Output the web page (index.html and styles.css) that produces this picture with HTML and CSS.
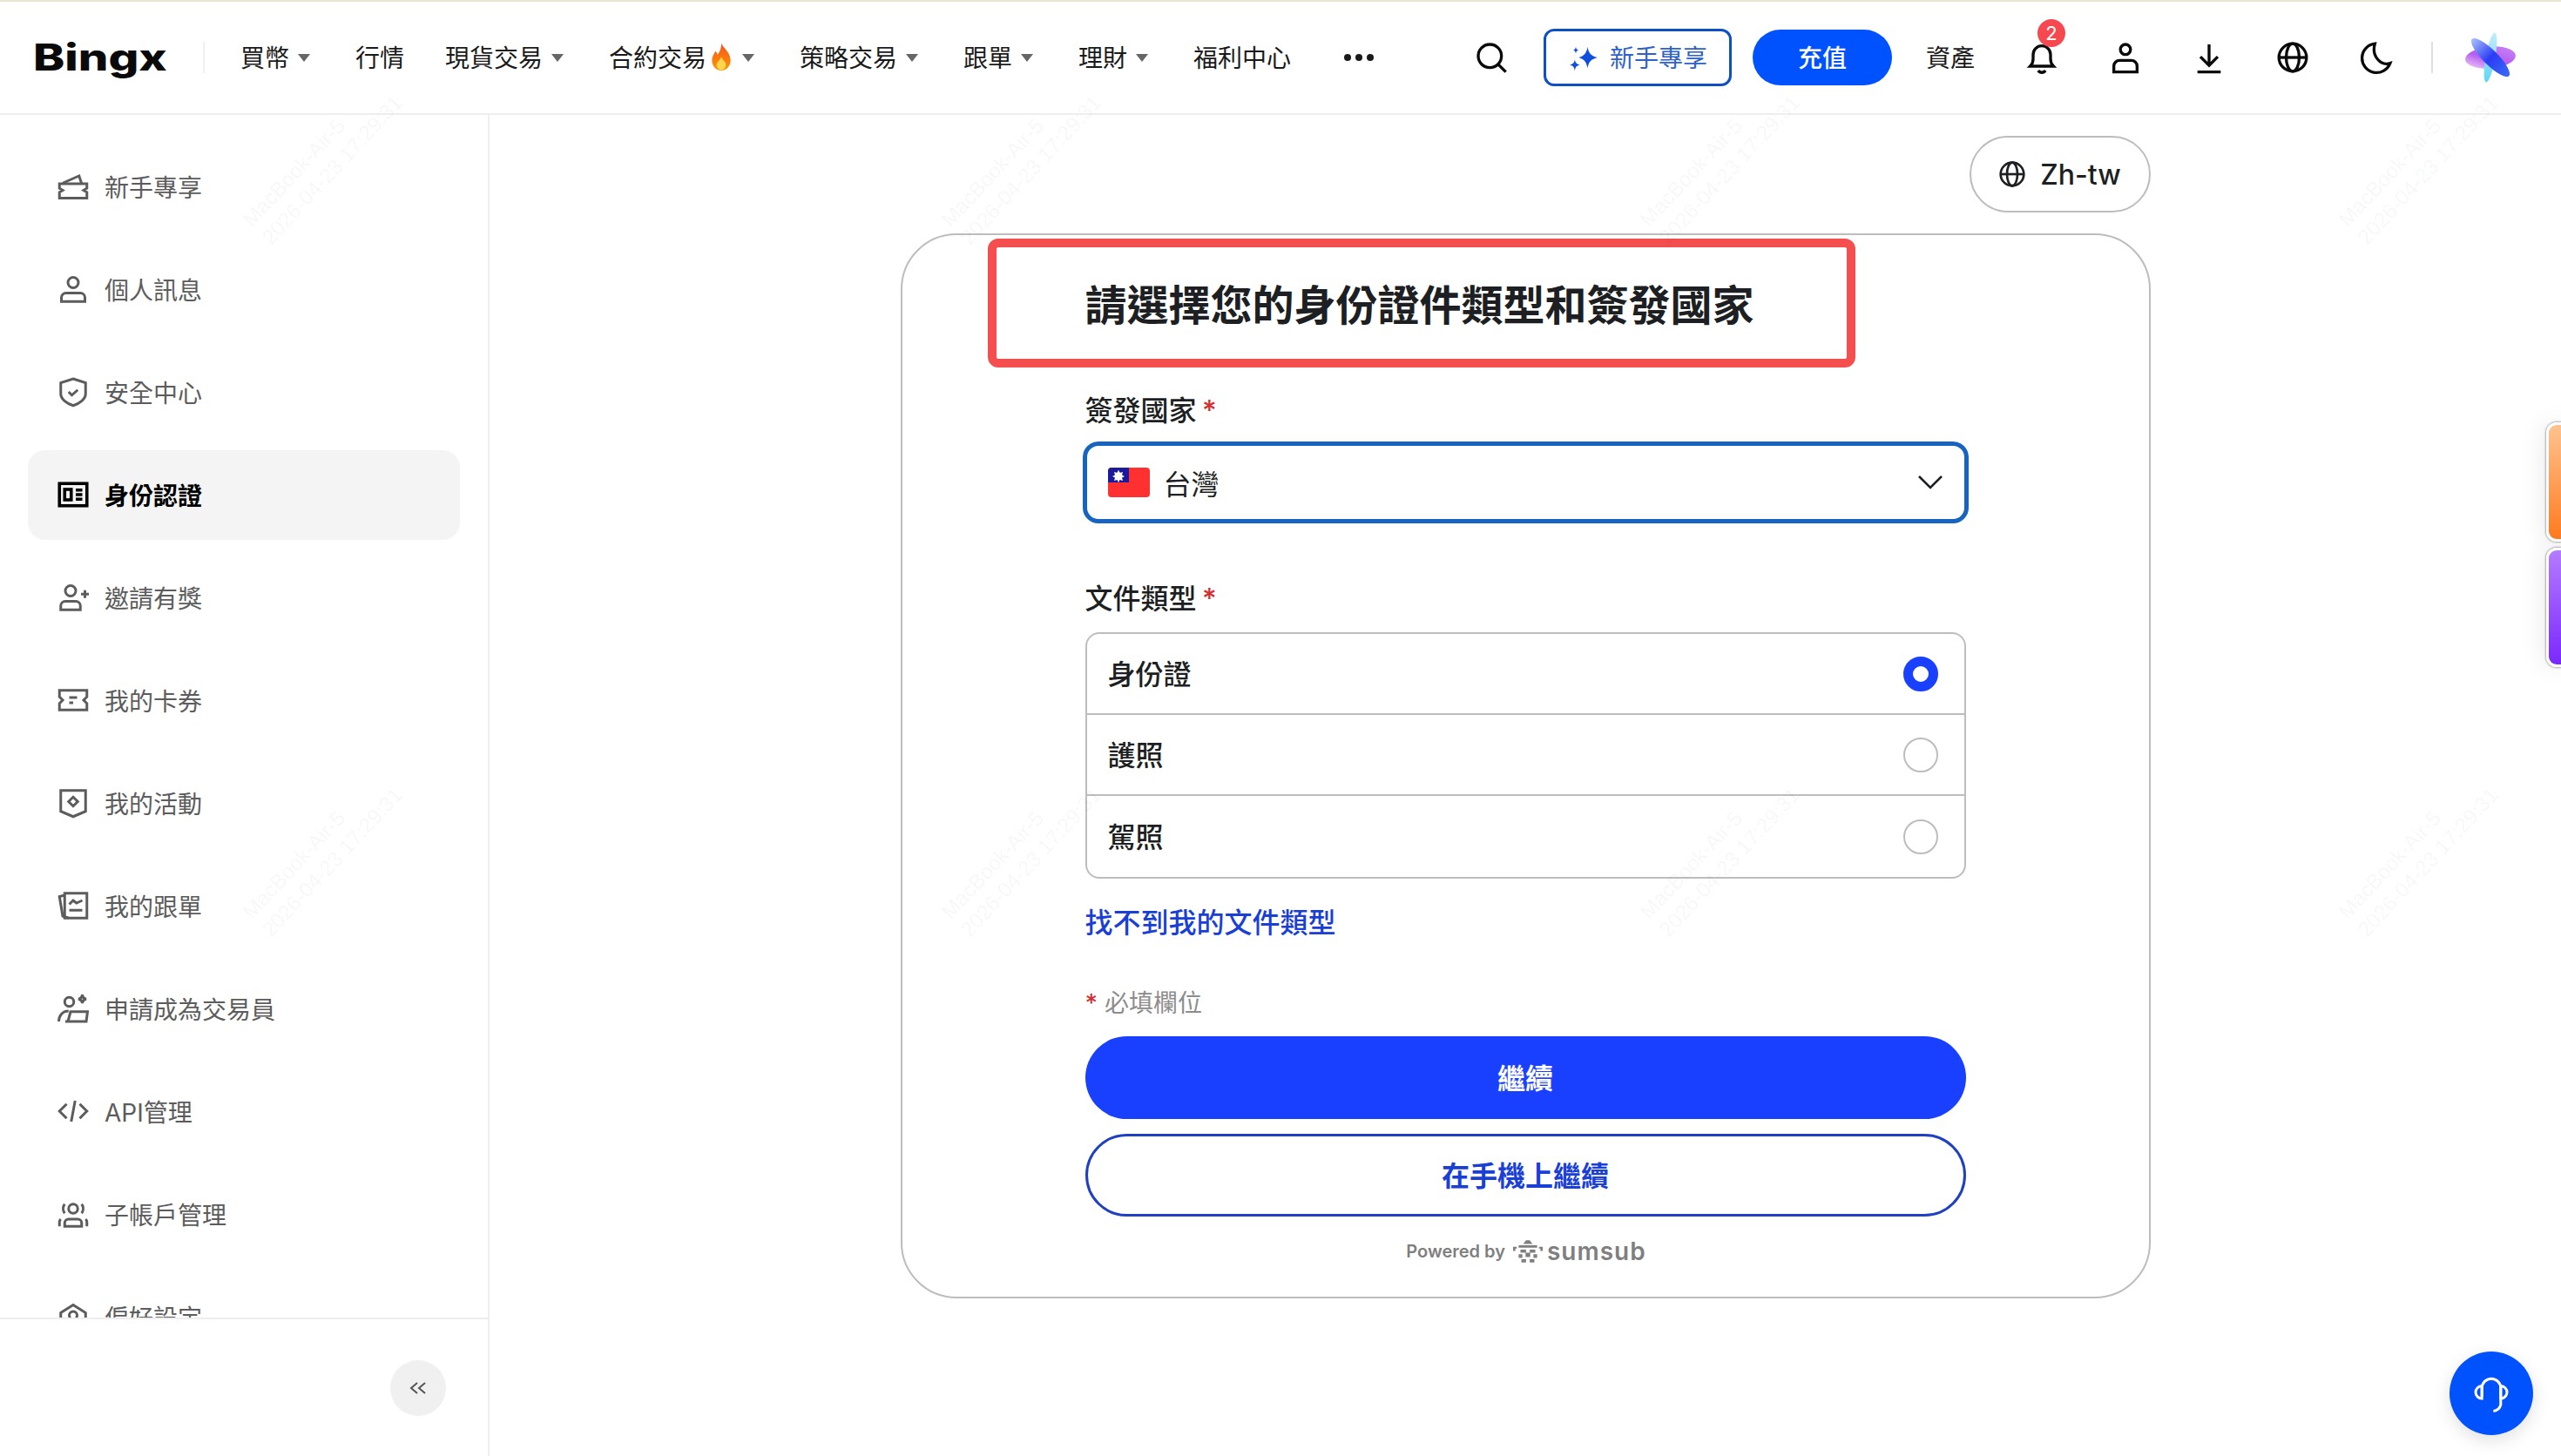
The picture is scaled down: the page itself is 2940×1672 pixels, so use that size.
FILE: index.html
```html
<!DOCTYPE html>
<html lang="zh-Hant">
<head>
  <meta charset="UTF-8" />
  <title>BingX - 身份認證</title>
  <link rel="stylesheet" href="styles.css">
</head>
<body>
  <header class="topbar">
    <div class="logo-box"><a class="logo">Bingx</a></div>
    <span class="topbar-line"></span>
    <nav class="topnav">
      <a class="topnav-item">買幣<i class="caret"></i></a>
      <a class="topnav-item tight">行情</a>
      <a class="topnav-item">現貨交易<i class="caret"></i></a>
      <a class="topnav-item">合約交易
        <svg class="fire" viewBox="0 0 24 32"><defs><linearGradient id="fireGrad" x1="0" y1="0" x2="0" y2="1"><stop offset="0" stop-color="#f4511e"/><stop offset="1" stop-color="#ff9800"/></linearGradient></defs><path d="M12 1c1 5 9 9 10 18 .6 7-4.500 12-10 12S1.500 26 2 19c.3-4 2.500-6 3.500-9 1.500 1 2.300 2.500 2.500 4C10.500 11 12.500 6 12 1z" fill="url(#fireGrad)"/><path d="M12 16c.5 3 5 5 5 9 0 3-2.500 5.500-5 5.500S7 28 7 25c0-3.500 4-5 5-9z" fill="#ffd54f"/></svg>
        <i class="caret"></i></a>
      <a class="topnav-item">策略交易<i class="caret"></i></a>
      <a class="topnav-item">跟單<i class="caret"></i></a>
      <a class="topnav-item">理財<i class="caret"></i></a>
      <a class="topnav-item">福利中心</a>
      <a class="topnav-more"><span></span><span></span><span></span></a>
    </nav>
    <div class="topbar-right">
      <svg class="top-icon search-icon" viewBox="0 0 24 24"><circle cx="11" cy="11" r="8"/><path d="M17 17l5 5"/></svg>
      <a class="newbie-btn">
        <svg class="sparkle" viewBox="0 0 32 32"><path d="M20 5c1 6 3 9 10 11-7 2-9 5-10 11-1-6-3-9-9-11 6-2 8-5 9-11z"/><path d="M7 18c.5 3 1.500 4.500 5 5.500-3.500 1-4.500 2.500-5 6-.5-3.500-1.500-5-5-6 3.500-1 4.500-2.500 5-5.500z"/><path d="M8 5c.3 2 1 3 3 3.500-2 .5-2.700 1.500-3 3.500-.3-2-1-3-3-3.500 2-.5 2.700-1.500 3-3.500z"/></svg>
        <span>新手專享</span>
      </a>
      <a class="deposit-btn">充值</a>
      <a class="assets-link">資產</a>
      <span class="bell-wrap">
        <svg class="top-icon" viewBox="0 0 24 24"><path d="M4 18c1.500-1.500 2-3 2-5V10a6 6 0 0 1 12 0v3c0 2 .5 3.500 2 5z"/><path d="M9.500 21a3 3 0 0 0 5 0"/></svg>
        <span class="badge">2</span>
      </span>
      <svg class="top-icon" viewBox="0 0 24 24"><circle cx="12" cy="6.500" r="3.500"/><path d="M4 22v-4a4 4 0 0 1 4-4h8a4 4 0 0 1 4 4v4z"/></svg>
      <svg class="top-icon" viewBox="0 0 24 24"><path d="M12 3v14M6 11.500l6 6 6-6M4 22h16"/></svg>
      <svg class="top-icon" viewBox="0 0 24 24"><circle cx="12" cy="12" r="9.500"/><ellipse cx="12" cy="12" rx="4.500" ry="9.500"/><path d="M2.500 12h19"/></svg>
      <svg class="top-icon" viewBox="0 0 24 24"><path d="M11 2.500a10 10 0 1 0 10.500 13.500C15 18 8.500 11 11 2.500z"/></svg>
      <span class="topbar-line right-line"></span>
      <svg class="avatar" viewBox="0 0 60 60"><defs><linearGradient id="avaA" x1="0" y1="1" x2="1" y2="0"><stop offset="0" stop-color="#f6e0fb"/><stop offset=".45" stop-color="#b65cf0"/><stop offset="1" stop-color="#c98af5"/></linearGradient><linearGradient id="avaB" x1="0" y1="0" x2="0" y2="1"><stop offset="0" stop-color="#a9c0fb"/><stop offset=".5" stop-color="#2b3cf5"/><stop offset="1" stop-color="#3a6cf5"/></linearGradient><linearGradient id="avaC" x1="0" y1="0" x2="0" y2="1"><stop offset="0" stop-color="#c4ecfb"/><stop offset="1" stop-color="#5fd6f5"/></linearGradient></defs><ellipse cx="30" cy="30" rx="29" ry="12.500" fill="url(#avaA)" transform="rotate(-5 30 30)"/><ellipse cx="30" cy="30" rx="5.500" ry="29" fill="url(#avaC)" transform="rotate(10 30 30)"/><ellipse cx="30" cy="30" rx="8.500" ry="30" fill="url(#avaB)" transform="rotate(-45 30 30)"/></svg>
    </div>
  </header>

  <div class="layout">
    <aside class="sidebar">
      <ul class="side-list">
        <li class="side-item">
          <svg class="side-icon" viewBox="0 0 24 24"><path d="M1.500 10h21v3.500L20 15l2.500 1.500V21h-21v-4.500L4 15l-2.500-1.500z"/><path d="M4 9.500l12.500-5.500 2 6"/></svg>新手專享
        </li>
        <li class="side-item">
          <svg class="side-icon" viewBox="0 0 24 24"><circle cx="12" cy="7" r="4"/><path d="M3 21.500v-3a3.500 3.500 0 0 1 3.500-3.500h11a3.500 3.500 0 0 1 3.500 3.500v3z"/></svg>個人訊息
        </li>
        <li class="side-item">
          <svg class="side-icon" viewBox="0 0 24 24"><path d="M12 2l9.500 3v8.500c0 4-4.500 7.500-9.500 9-5-1.500-9.500-5-9.500-9V5z"/><path d="M8.500 12l2.500 2.500 4.500-4"/></svg>安全中心
        </li>
        <li class="side-item active">
          <svg class="side-icon" viewBox="0 0 24 24"><rect x="1.500" y="3.500" width="21" height="17"/><rect x="5.500" y="8" width="5" height="8"/><path d="M14 8.500h5M14 12h5M14 15.500h5"/></svg>身份認證
        </li>
        <li class="side-item">
          <svg class="side-icon" viewBox="0 0 24 24"><circle cx="10" cy="7" r="4"/><path d="M2.500 21.500v-3A3.500 3.500 0 0 1 6 15h8a3.500 3.500 0 0 1 3.500 3.500v3zM18 9.500h6M21 6.500v6"/></svg>邀請有獎
        </li>
        <li class="side-item">
          <svg class="side-icon" viewBox="0 0 24 24"><path d="M1.500 4.500h21v5L20 12l2.500 2.500v5h-21v-5L4 12 1.500 9.500z"/><path d="M9 10h6M9 14h3"/></svg>我的卡券
        </li>
        <li class="side-item">
          <svg class="side-icon" viewBox="0 0 24 24"><path d="M2.500 2.500h19v16l-9.500 4-9.500-4z"/><path d="M12 7.500l3.500 3.500-3.500 3.500L8.500 11z"/></svg>我的活動
        </li>
        <li class="side-item">
          <svg class="side-icon" viewBox="0 0 24 24"><rect x="5.500" y="2.500" width="17" height="19"/><path d="M5.500 4L1.500 5l2.500 15 4.500 1.500M9 11l3-3 2.500 2L19 8M9 15.500h10"/></svg>我的跟單
        </li>
        <li class="side-item">
          <svg class="side-icon" viewBox="0 0 24 24"><circle cx="9" cy="7" r="3.500"/><path d="M1 22c0-4 2.500-8 7.500-8M8 22l2-7.500h13L22 22zM6 22h16M19 1.500c.2 2 1 3 3 3.300-2 .4-2.800 1.200-3 3.200-.2-2-1-2.800-3-3.200 2-.3 2.800-1.300 3-3.300z"/></svg>申請成為交易員
        </li>
        <li class="side-item">
          <svg class="side-icon" viewBox="0 0 24 24"><path d="M7 6.500L1.500 12 7 17.500M17 6.500l5.500 5.500-5.500 5.500M13.500 4l-3 16"/></svg>API管理
        </li>
        <li class="side-item">
          <svg class="side-icon" viewBox="0 0 24 24"><circle cx="12" cy="8" r="3.500"/><path d="M5.500 21.500v-2.500a3 3 0 0 1 3-3h7a3 3 0 0 1 3 3v2.500zM5.500 4.500c-1.500 2-1.500 5 0 7M18.500 4.500c1.500 2 1.500 5 0 7M1.500 21.500v-3.500c0-1 .5-1.500 1-2M22.500 21.500v-3.500c0-1-.5-1.500-1-2"/></svg>子帳戶管理
        </li>
        <li class="side-item">
          <svg class="side-icon" viewBox="0 0 24 24"><path d="M2.500 9l9.500-6 9.500 6v12h-19z"/><circle cx="12" cy="11" r="3"/></svg>偏好設定
        </li>
      </ul>
      <div class="side-foot">
        <button class="collapse-btn">
          <svg viewBox="0 0 24 24"><path d="M11 6l-7 6 7 6M20 6l-7 6 7 6"/></svg>
        </button>
      </div>
    </aside>

    <main class="content">
      <div class="content-wrap">
        <button class="lang-btn">
          <svg viewBox="0 0 24 24"><circle cx="12" cy="12" r="10"/><ellipse cx="12" cy="12" rx="4.500" ry="10"/><path d="M2 12h20"/></svg>
          Zh-tw
        </button>

        <section class="card">
          <h1 class="card-title">請選擇您的身份證件類型和簽發國家</h1>

          <div class="field-label first">簽發國家 <b>*</b></div>
          <div class="select-box">
            <svg class="flag" viewBox="0 0 48 34"><rect width="48" height="34" rx="4" fill="#fe3030"/><path d="M0 4a4 4 0 0 1 4-4h20v17H0z" fill="#1a1a9c"/><circle cx="12" cy="8.500" r="3.200" fill="#fff"/><path d="M12 2.500l1.500 3.500 3.500-1-1 3.500 3 1.500-3 1.500 1 3.500-3.500-1-1.500 3-1.500-3-3.500 1 1-3.500-3-1.500 3-1.500-1-3.500 3.500 1z" fill="#fff"/></svg>
            <span>台灣</span>
            <svg class="chevron" viewBox="0 0 30 18"><path d="M2 2l13 13L28 2"/></svg>
          </div>

          <div class="field-label">文件類型 <b>*</b></div>
          <div class="doc-list">
            <div class="doc-row"><span class="doc-name">身份證</span><span class="radio on"></span></div>
            <div class="doc-row"><span class="doc-name">護照</span><span class="radio"></span></div>
            <div class="doc-row"><span class="doc-name">駕照</span><span class="radio"></span></div>
          </div>

          <a class="doc-link">找不到我的文件類型</a>
          <div class="required-note"><b>*</b> 必填欄位</div>

          <button class="btn-primary">繼續</button>
          <button class="btn-outline">在手機上繼續</button>

          <div class="powered">
            Powered by
            <svg class="sumsub-mark" viewBox="0 0 32 26"><path d="M11 5l3-4h4l3 4zM6 6.500h20v2.500H6zM0 8h4v2H2.500v2.500H0zM28 8h4v4.500h-2.500V10H28zM8 11h6v3.500H8zM18 11h6v3.500h-6zM13.500 14.500h5V19h-5zM6 16h4v4H6zM22 16h4v4h-4zM9 21.500h5V25H9zM18 21.500h5V25h-5z"/></svg>
            <span class="sumsub">sumsub</span>
          </div>
        </section>
      </div>
    </main>
  </div>

  <!-- things that sit on top of the page -->
  <div class="mark-box"></div>
  <div class="side-tab orange"></div>
  <div class="side-tab purple"></div>
  <button class="help-btn">
    <svg viewBox="0 0 40 40"><path d="M11 23V15a9 9 0 0 1 18 0v16a8 8 0 0 1-7 6"/><path d="M11 13a6 6 0 0 0 0 12zM29 13a6 6 0 0 1 0 12z"/></svg>
  </button>

  <div class="watermarks">
    <div class="wm">MacBook-Air-5<br>2026-04-23 17:29:31</div>
    <div class="wm">MacBook-Air-5<br>2026-04-23 17:29:31</div>
    <div class="wm">MacBook-Air-5<br>2026-04-23 17:29:31</div>
    <div class="wm">MacBook-Air-5<br>2026-04-23 17:29:31</div>
    <div class="wm">MacBook-Air-5<br>2026-04-23 17:29:31</div>
    <div class="wm">MacBook-Air-5<br>2026-04-23 17:29:31</div>
    <div class="wm">MacBook-Air-5<br>2026-04-23 17:29:31</div>
    <div class="wm">MacBook-Air-5<br>2026-04-23 17:29:31</div>
  </div>
</body>
</html>
```

FILE: styles.css
```css
* {
  margin: 0;
  padding: 0;
  box-sizing: border-box;
  font-family: Inter, "Noto Sans CJK TC", sans-serif;
}
html, body {
  height: 100%;
  overflow: hidden;
}
body {
  background: #fff;
  color: #1d1f22;
  display: flex;
  flex-direction: column;
  position: relative;
}
button {
  cursor: pointer;
  background: none;
  border: none;
}
ul {
  list-style: none;
}

/* top bar */
.topbar {
  height: 132px;
  flex: none;
  display: flex;
  align-items: center;
  padding: 0 51px 0 38px;
  border-top: 2px solid #e8e5d3;
  border-bottom: 2px solid #eeeeee;
}
.logo-box {
  width: 154px;
  flex: none;
}
.logo {
  display: block;
  font-size: 42px;
  font-weight: 800;
  color: #0a0a0a;
  line-height: 1;
  transform: scaleX(1.3);
  transform-origin: left center;
}
.topbar-line {
  width: 2px;
  height: 36px;
  background: #f0f0f0;
  margin: 0 41px;
}
.topnav {
  display: flex;
  align-items: center;
  gap: 52px;
}
.topnav-item {
  display: flex;
  align-items: center;
  font-size: 28px;
  padding-bottom: 3px;
  color: #1a1a1a;
  white-space: nowrap;
}
.topnav-item.tight {
  margin-right: -5px;
}
.caret {
  width: 0;
  height: 0;
  margin: 3px 0 0 10px;
  border-left: 7px solid transparent;
  border-right: 7px solid transparent;
  border-top: 9px solid #666;
}
.fire {
  width: 28px;
  height: 34px;
  margin-left: 3px;
}
.topnav-more {
  display: flex;
  gap: 5px;
  margin-left: 9px;
}
.topnav-more span {
  width: 8px;
  height: 8px;
  border-radius: 50%;
  background: #1a1a1a;
}
.topbar-right {
  margin-left: auto;
  display: flex;
  align-items: center;
}
.top-icon {
  width: 40px;
  height: 40px;
  fill: none;
  stroke: #0a0a0a;
  stroke-width: 2;
  flex: none;
  margin-left: 56px;
}
.search-icon {
  margin-left: 0;
}
.newbie-btn {
  width: 216px;
  height: 66px;
  margin-left: 40px;
  display: flex;
  align-items: center;
  justify-content: center;
  gap: 12px;
  border: 3px solid #0e50c4;
  border-radius: 12px;
  font-size: 28px;
  color: #2f62c9;
}
.newbie-btn span {
  padding-bottom: 3px;
}
.sparkle {
  width: 36px;
  height: 36px;
  fill: #0f4fe0;
}
.deposit-btn {
  width: 160px;
  height: 64px;
  margin-left: 24px;
  padding-bottom: 3px;
  display: flex;
  align-items: center;
  justify-content: center;
  border-radius: 32px;
  background: #0052ff;
  color: #fff;
  font-size: 28px;
  font-weight: 500;
}
.assets-link {
  margin-left: 39px;
  padding-bottom: 3px;
  font-size: 28px;
  color: #1a1a1a;
}
.bell-wrap {
  position: relative;
  display: flex;
  margin-left: 57px;
}
.bell-wrap .top-icon {
  margin-left: 0;
}
.badge {
  position: absolute;
  top: -24px;
  right: -7px;
  width: 32px;
  height: 32px;
  border-radius: 50%;
  background: #f5484f;
  color: #fff;
  font-size: 22px;
  line-height: 32px;
  text-align: center;
}
.right-line {
  margin: 0 36px 0 43px;
  background: #dfdfdf;
}
.avatar {
  width: 60px;
  height: 60px;
}

/* page body */
.layout {
  flex: 1;
  display: flex;
  min-height: 0;
}
.sidebar {
  width: 562px;
  flex: none;
  display: flex;
  flex-direction: column;
  border-right: 2px solid #eeeeee;
}
.side-list {
  flex: 1;
  min-height: 0;
  overflow: hidden;
  padding: 31px 32px 0;
  display: flex;
  flex-direction: column;
  gap: 15px;
}
.side-item {
  height: 103px;
  flex: none;
  display: flex;
  align-items: center;
  gap: 18px;
  padding-left: 34px;
  padding-bottom: 1px;
  border-radius: 20px;
  font-size: 28px;
  color: #5c5c5c;
}
.side-item.active {
  background: #f4f4f4;
  color: #000;
  font-weight: 700;
}
.side-icon {
  width: 36px;
  height: 36px;
  flex: none;
  fill: none;
  stroke: #5c5c5c;
  stroke-width: 2;
}
.active .side-icon {
  stroke: #000;
  stroke-width: 2.400;
}
.side-foot {
  height: 159px;
  flex: none;
  display: flex;
  align-items: center;
  justify-content: flex-end;
  padding: 0 48px 0 0;
  border-top: 2px solid #eeeeee;
}
.collapse-btn {
  width: 64px;
  height: 64px;
  border-radius: 50%;
  background: #f0f0f0;
  display: flex;
  align-items: center;
  justify-content: center;
}
.collapse-btn svg {
  width: 24px;
  height: 24px;
  fill: none;
  stroke: #555;
  stroke-width: 2;
}

.content {
  flex: 1;
  min-width: 0;
}
.content-wrap {
  width: 1435px;
  margin: 0 auto;
  padding-top: 24px;
  display: flex;
  flex-direction: column;
  align-items: flex-end;
  gap: 24px;
}
.lang-btn {
  width: 208px;
  height: 88px;
  border: 2px solid #bdbdbd;
  border-radius: 44px;
  display: flex;
  align-items: center;
  justify-content: center;
  gap: 16px;
  font-size: 32px;
  font-weight: 500;
  color: #1d1f22;
}
.lang-btn svg {
  width: 32px;
  height: 32px;
  fill: none;
  stroke: #1d1f22;
  stroke-width: 2;
}
.card {
  width: 100%;
  height: 1223px;
  border: 2px solid #bdbdbd;
  border-radius: 64px;
  padding: 49px 210px 0;
}
.card-title {
  font-size: 48px;
  line-height: 64px;
  font-weight: 700;
  color: #1d1f22;
}
.field-label {
  font-size: 32px;
  line-height: 44px;
  margin-top: 65px;
  font-weight: 500;
  word-spacing: -2px;
}
.field-label.first {
  margin-top: 67px;
}
.field-label b,
.required-note b {
  color: #d32f2f;
  font-weight: 500;
}
.select-box {
  height: 94px;
  margin: 13px -3px 0;
  padding: 0 24px;
  display: flex;
  align-items: center;
  border: 5px solid #1565c0;
  border-radius: 18px;
  font-size: 32px;
}
.flag {
  width: 48px;
  height: 34px;
  margin-right: 16px;
}
.chevron {
  width: 30px;
  height: 18px;
  margin-left: auto;
  fill: none;
  stroke: #1d1f22;
  stroke-width: 2.500;
}
.doc-list {
  margin-top: 16px;
  border: 2px solid #bdbdbd;
  border-radius: 16px;
}
.doc-row {
  height: 93px;
  padding: 0 30px 0 24px;
  display: flex;
  align-items: center;
  justify-content: space-between;
  font-size: 32px;
  font-weight: 500;
  border-bottom: 2px solid #bdbdbd;
}
.doc-row:last-child {
  border-bottom: none;
}
.doc-name {
  padding-bottom: 3px;
}
.radio {
  width: 40px;
  height: 40px;
  border-radius: 50%;
  border: 2px solid #bdbdbd;
}
.radio.on {
  border: 11px solid #1a40ff;
}
.doc-link {
  display: block;
  margin-top: 29px;
  font-size: 32px;
  line-height: 44px;
  font-weight: 500;
  color: #1a3fd6;
}
.required-note {
  margin-top: 50px;
  font-size: 28px;
  line-height: 40px;
  color: #8c8c8c;
}
.btn-primary,
.btn-outline {
  display: block;
  width: 100%;
  padding-bottom: 3px;
  border-radius: 48px;
  font-size: 32px;
  font-weight: 700;
}
.btn-primary {
  height: 95px;
  margin-top: 18px;
  background: #1a40ff;
  color: #fff;
}
.btn-outline {
  height: 95px;
  margin-top: 17px;
  border: 3px solid #1f40c0;
  color: #1a3fd6;
}
.powered {
  margin-top: 24px;
  padding-left: 2px;
  height: 32px;
  display: flex;
  align-items: center;
  justify-content: center;
  font-size: 20px;
  font-weight: 600;
  color: #7f7f7f;
}
.sumsub-mark {
  width: 34px;
  height: 28px;
  fill: #7f7f7f;
  margin: 0 5px 0 9px;
}
.sumsub {
  font-size: 28px;
  font-weight: 600;
  letter-spacing: 1px;
}

/* overlays */
.mark-box {
  position: absolute;
  left: 1134px;
  top: 274px;
  width: 996px;
  height: 148px;
  border: 10px solid #f54e4e;
  border-radius: 12px;
}
.side-tab {
  position: absolute;
  right: 0;
  width: 17px;
  height: 137px;
  border: 3px solid #fff;
  border-right: none;
  border-radius: 12px 0 0 12px;
  box-shadow: 0 0 2px 1px rgba(0, 0, 0, 0.3), 0 0 30px rgba(0, 0, 0, 0.12);
}
.side-tab.orange {
  top: 485px;
  background: linear-gradient(#ffc38f, #ff7a1f);
}
.side-tab.purple {
  top: 629px;
  background: linear-gradient(#b47cff, #7a28ff);
}
.help-btn {
  position: absolute;
  left: 2812px;
  top: 1552px;
  width: 96px;
  height: 96px;
  border-radius: 50%;
  background: #0052ff;
  display: flex;
  align-items: center;
  justify-content: center;
  box-shadow: 0 6px 20px rgba(0, 0, 0, 0.12);
}
.help-btn svg {
  width: 48px;
  height: 48px;
  fill: none;
  stroke: #fff;
  stroke-width: 2.500;
}
.watermarks {
  position: absolute;
  inset: 0;
  overflow: hidden;
  display: grid;
  grid-template-columns: repeat(4, 802px);
  grid-auto-rows: 795px;
  place-items: center;
  pointer-events: none;
}
.wm {
  transform: translate(-31px, -213px) rotate(-47deg);
  font-family: "Liberation Sans", sans-serif;
  font-size: 24px;
  line-height: 30px;
  white-space: nowrap;
  color: rgba(0, 0, 0, 0.045);
}
```
